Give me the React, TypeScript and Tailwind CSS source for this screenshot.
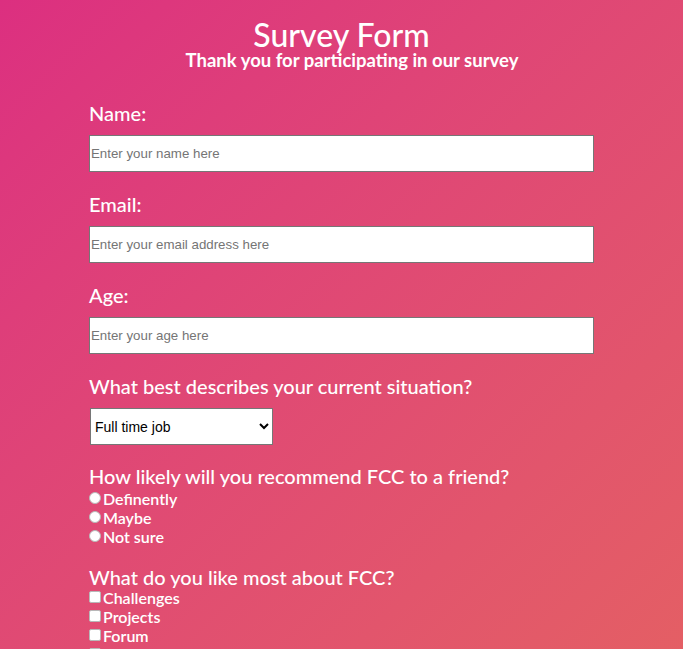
import { useState } from 'react';

const radios = ['Definently', 'Maybe', 'Not sure'];
const checks = ['Challenges', 'Projects', 'Forum', 'Community'];

function TextField({ label, placeholder, type = 'text' }: { label: string; placeholder: string; type?: string }) {
  return (
    <div className="mb-[20px]">
      <label className="block text-[20px] leading-[24px] font-medium text-white">{label}</label>
      <input
        type={type}
        placeholder={placeholder}
        className="mt-[10px] block h-[37px] w-full border border-[#767676] bg-white px-[1px] text-[13.3px] text-black placeholder:text-[#757575] outline-none"
        style={{ fontFamily: 'Arial, "Liberation Sans", sans-serif' }}
      />
    </div>
  );
}

export default function App() {
  const [situation, setSituation] = useState('full');

  return (
    <div
      className="min-h-[649px] w-full bg-gradient-to-br from-[#dc2f80] to-[#e45f64] text-white"
      style={{ fontFamily: 'Lato, "Noto Sans", sans-serif' }}
    >
      <header className="pt-[18px] text-center">
        <h1 className="text-[32px] leading-[33px] font-medium">Survey Form</h1>
        <p className="pl-[21px] text-[18.5px] leading-[19px] font-bold">Thank you for participating in our survey</p>
      </header>

      <form className="mx-auto mt-[31px] w-[505px]">
        <TextField label="Name:" placeholder="Enter your name here" />
        <TextField label="Email:" placeholder="Enter your email address here" type="email" />
        <TextField label="Age:" placeholder="Enter your age here" type="number" />

        <div className="mb-[19px]">
          <p className="text-[20px] leading-[24px] font-medium">What best describes your current situation?</p>
          <select
            value={situation}
            onChange={(e) => setSituation(e.target.value)}
            className="mt-[10px] ml-[1px] h-[37px] w-[183px] border border-[#767676] bg-white pl-0 text-[14px] text-black"
            style={{ fontFamily: 'Arial, "Liberation Sans", sans-serif' }}
          >
            <option value="full">Full time job</option>
            <option value="part">Part time job</option>
            <option value="student">Student</option>
            <option value="other">Other</option>
          </select>
        </div>

        <div className="mb-[19px]">
          <p className="mb-[1px] text-[20px] leading-[24px] font-medium">How likely will you recommend FCC to a friend?</p>
          {radios.map((r) => (
            <label key={r} className="flex h-[19px] items-center text-[16px] font-semibold">
              <input
                type="radio"
                name="recommend"
                value={r}
                className="m-0 mr-[2px] h-[12px] w-[12px] shrink-0 -translate-y-[1px] appearance-none rounded-full border border-[#b8b8b8] bg-white checked:border-[4px] checked:border-[#1a73e8]"
              />
              {r}
            </label>
          ))}
        </div>

        <div>
          <p className="-mb-[1px] text-[20px] leading-[24px] font-medium">What do you like most about FCC?</p>
          {checks.map((c) => (
            <label key={c} className="flex h-[19px] items-center text-[16px] font-semibold">
              <input
                type="checkbox"
                value={c}
                className="m-0 mr-[2px] h-[12px] w-[12px] shrink-0 -translate-y-[1px] appearance-none rounded-[2px] border border-[#b8b8b8] bg-white checked:bg-[#1a73e8]"
              />
              {c}
            </label>
          ))}
        </div>
      </form>
    </div>
  );
}
